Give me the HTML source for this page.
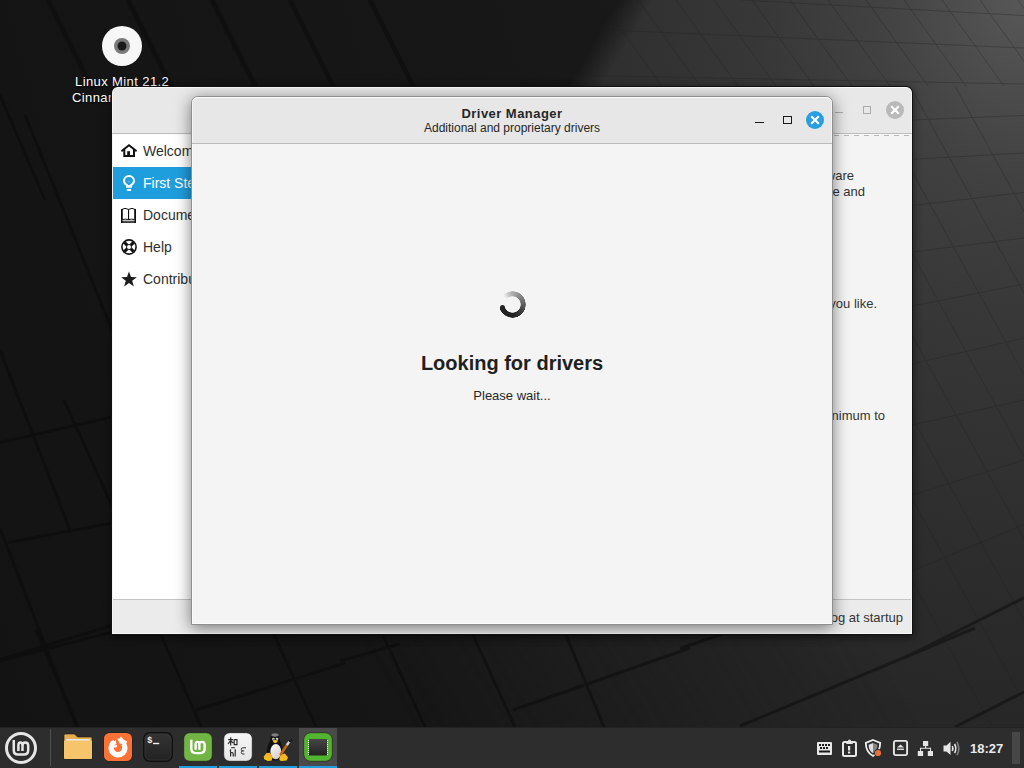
<!DOCTYPE html>
<html><head><meta charset="utf-8">
<style>
*{margin:0;padding:0;box-sizing:border-box}
html,body{width:1024px;height:768px;overflow:hidden;background:#151515;font-family:"Liberation Sans",sans-serif}
.a{position:absolute}
#bg{position:absolute;left:0;top:0;width:1024px;height:768px;
 background:
  radial-gradient(ellipse 620px 760px at 1040px -20px, rgba(62,62,62,1) 0%, rgba(50,50,50,1) 45%, rgba(40,40,40,0.6) 75%, rgba(30,30,30,0) 100%),
  linear-gradient(90deg,#131313 0%,#161616 50%,#222 100%);}
.dlabel{position:absolute;color:#fff;font-size:13px;line-height:16px;letter-spacing:0.4px;text-shadow:0 1px 2px #000;white-space:nowrap}
.t{position:absolute;white-space:nowrap;line-height:1}
.item{position:absolute;left:113px;width:300px;height:32px}
.item.sel{background:#1f9ede}
.lbl{position:absolute;left:143px;font-size:14px;line-height:14px;color:#2f2f2f;white-space:nowrap}
.wtext{position:absolute;font-size:13px;line-height:13px;color:#333;white-space:nowrap;text-align:right}
.title{position:absolute;left:192px;width:640px;text-align:center;color:#262626;white-space:nowrap;line-height:1}
.ind{position:absolute;top:766px;height:2px;width:38px;background:#1f9ede}
</style></head><body>
<div class="a" style="left:0;top:0;width:1024px;height:768px;background:linear-gradient(75deg,#131313 0%,#171717 55%,#1c1c1c 100%)"></div>
<div class="a" style="left:0;top:0;width:1024px;height:768px;-webkit-mask-image:linear-gradient(59deg,transparent 377px,#000 816px);mask-image:linear-gradient(59deg,transparent 377px,#000 816px)">
 <div class="a" style="left:0;top:0;width:1024px;height:768px;background:radial-gradient(ellipse 600px 720px at 1024px 0px,#575757 0%,#414141 25%,#373737 45%,#2c2c2c 80%,#272727 100%);-webkit-mask-image:linear-gradient(120.5deg,transparent 532px,#000 562px);mask-image:linear-gradient(120.5deg,transparent 532px,#000 562px)"></div>
</div>
<svg class="a" style="left:0;top:0" width="1024" height="768" viewBox="0 0 1024 768">
 <defs><clipPath id="rc"><rect x="0" y="0" width="1024" height="86"/><rect x="912" y="0" width="112" height="727"/></clipPath></defs>
 <g stroke="#1e1e1e" stroke-width="1" opacity="0.3" clip-path="url(#rc)"><line x1="600" y1="0" x2="661.9" y2="86"/><line x1="638" y1="0" x2="699.9" y2="86"/><line x1="676" y1="0" x2="737.9" y2="86"/><line x1="714" y1="0" x2="775.9" y2="86"/><line x1="752" y1="0" x2="813.9" y2="86"/><line x1="790" y1="0" x2="851.9" y2="86"/><line x1="828" y1="0" x2="889.9" y2="86"/><line x1="866" y1="0" x2="927.9" y2="86"/><line x1="904" y1="0" x2="965.9" y2="86"/><line x1="942" y1="0" x2="1003.9" y2="86"/><line x1="980" y1="0" x2="1041.9" y2="86"/><line x1="1018" y1="0" x2="1079.9" y2="86"/><line x1="560" y1="28" x2="1024" y2="48"/><line x1="741" y1="0" x2="1024" y2="15.6"/><line x1="560" y1="75" x2="1024" y2="84"/><line x1="912" y1="120" x2="1024" y2="115.4"/><line x1="912" y1="159.3" x2="1024" y2="153"/><line x1="912" y1="205.5" x2="1024" y2="192.5"/><line x1="912" y1="252" x2="1024" y2="238"/><line x1="912" y1="306" x2="1024" y2="284"/><line x1="912" y1="364" x2="1024" y2="338"/><line x1="912" y1="425" x2="1024" y2="400"/><line x1="912" y1="495" x2="1024" y2="460"/><line x1="912" y1="571" x2="1024" y2="524.6"/><line x1="640" y1="86" x2="992.0" y2="726"/><line x1="685" y1="86" x2="1037.0" y2="726"/><line x1="730" y1="86" x2="1082.0" y2="726"/><line x1="775" y1="86" x2="1127.0" y2="726"/><line x1="820" y1="86" x2="1172.0" y2="726"/><line x1="865" y1="86" x2="1217.0" y2="726"/><line x1="910" y1="86" x2="1262.0" y2="726"/><line x1="955" y1="86" x2="1307.0" y2="726"/></g>
 <g stroke="#0b0b0b" stroke-width="5" opacity="0.5"><line x1="48" y1="0" x2="93" y2="90"/><line x1="128" y1="0" x2="173" y2="90"/><line x1="212" y1="0" x2="257" y2="90"/><line x1="290" y1="0" x2="335" y2="90"/><line x1="370" y1="0" x2="415" y2="90"/></g>
 <g stroke="#080808" stroke-width="3" opacity="0.45"><line x1="36" y1="630" x2="78" y2="727"/><line x1="159" y1="630" x2="201" y2="727"/><line x1="272" y1="630" x2="316" y2="727"/><line x1="383" y1="635" x2="425" y2="727"/><line x1="473" y1="635" x2="515" y2="727"/><line x1="566" y1="635" x2="604" y2="727"/><line x1="0" y1="661" x2="112" y2="632"/><line x1="196" y1="710" x2="345" y2="663"/><line x1="340" y1="661" x2="400" y2="644"/><line x1="513" y1="710" x2="690" y2="648"/><line x1="680" y1="648.5" x2="740" y2="628"/><line x1="740" y1="726" x2="975" y2="628"/><line x1="955" y1="727" x2="1024" y2="692"/><line x1="904" y1="658" x2="1024" y2="597.7"/><line x1="64" y1="400" x2="112" y2="506"/><line x1="0" y1="528" x2="76.6" y2="727"/><line x1="0" y1="442.5" x2="112" y2="417"/><line x1="8.5" y1="542.5" x2="112" y2="523"/><line x1="0" y1="659.6" x2="112" y2="625.5"/><line x1="0" y1="95" x2="45" y2="200"/><line x1="25" y1="115" x2="112" y2="330"/><line x1="0" y1="350" x2="70" y2="530"/></g>
</svg>

<!-- desktop icon -->
<svg class="a" style="left:100px;top:24px" width="44" height="44" viewBox="0 0 44 44">
 <circle cx="22" cy="22" r="20" fill="#f7f7f7"/>
 <circle cx="22" cy="22" r="8" fill="#7a7a7a"/>
 <circle cx="22" cy="22" r="4.5" fill="#1a1a1a"/>
</svg>
<div class="dlabel" style="left:75px;top:74px">Linux Mint 21.2</div>
<div class="dlabel" style="left:72px;top:90px">Cinnamon</div>

<!-- ============ welcome window (back) ============ -->
<div class="a" style="left:111px;top:86px;width:802px;height:549px;background:#111;border-radius:7px 7px 0 0;box-shadow:0 2px 8px rgba(0,0,0,.5)"></div>
<div class="a" style="left:112px;top:87px;width:800px;height:547px;background:#e8e8e8;border-radius:6px 6px 0 0;border-top:1px solid #fafafa;border-left:1px solid #f4f4f4;border-right:1px solid #f4f4f4;border-bottom:1px solid #fafafa"></div>
<div class="a" style="left:112px;top:133px;width:800px;height:1px;background:#bdbdbd"></div>
<div class="a" style="left:112px;top:134px;width:800px;height:1px;background:#fafafa"></div>
<div class="a" style="left:113px;top:135px;width:300px;height:464px;background:#fff"></div>
<div class="a" style="left:413px;top:135px;width:498px;height:464px;background:#f4f4f4"></div>
<!-- dashed line -->
<div class="a" style="left:834px;top:135px;width:77px;height:1px;background:repeating-linear-gradient(90deg,#b8b8b8 0 5px,transparent 5px 10px)"></div>
<div class="a" style="left:113px;top:599px;width:798px;height:1px;background:#c4c4c4"></div>
<div class="a" style="left:113px;top:600px;width:798px;height:33px;background:#ebebeb"></div>

<!-- sidebar -->
<div class="item" style="top:135px"></div>
<div class="item sel" style="top:167px"></div>
<svg class="a" style="left:119px;top:141px" width="20" height="20" viewBox="0 0 20 20">
 <path d="M3 9.7 L10 4.3 L17 9.7" fill="none" stroke="#111" stroke-width="2" stroke-linecap="round" stroke-linejoin="miter"/>
 <path d="M5.3 8.3 V15 H15 V8.3" fill="none" stroke="#111" stroke-width="2"/>
 <rect x="8.2" y="10.2" width="2.8" height="5" fill="#111"/>
</svg>
<svg class="a" style="left:119px;top:173px" width="20" height="20" viewBox="0 0 20 20">
 <path d="M7 14.8 V12.6 C5.2 11.4 4 9.8 4 8 A6 6 0 0 1 16 8 C16 9.8 14.8 11.4 13 12.6 V14.8 Z" fill="#fff"/>
 <path d="M10 12.5 C8.6 11.2 6 10 6 8 A4 4 0 0 1 14 8 C14 10 11.4 11.2 10 12.5 Z" fill="#1f9ede"/>
 <path d="M8.4 8 H11.6 L10 9.6 Z" fill="#6cbcec"/>
 <rect x="7.9" y="16" width="4.1" height="2" fill="#fff"/>
</svg>
<svg class="a" style="left:119px;top:205px" width="20" height="20" viewBox="0 0 20 20">
 <rect x="2" y="4" width="1.8" height="13.8" fill="#111"/>
 <rect x="15.2" y="4" width="1.8" height="13.8" fill="#111"/>
 <path d="M2.5 4.6 Q6 2.2 9.5 4.4 Q13 2.2 16.5 4.6" fill="none" stroke="#111" stroke-width="1"/>
 <rect x="9" y="4.2" width="1.1" height="11.3" fill="#111"/>
 <path d="M3.5 14.6 Q6.5 13.6 9.5 14.6 Q12.5 13.6 15.5 14.6" fill="none" stroke="#111" stroke-width="1"/>
 <rect x="3.6" y="15" width="11.8" height="1.4" fill="#c4c4c4"/>
 <rect x="2" y="16.3" width="15" height="1.5" fill="#111"/>
</svg>
<svg class="a" style="left:119px;top:237px" width="20" height="20" viewBox="0 0 20 20">
 <circle cx="10" cy="10" r="7.9" fill="#111"/>
 <circle cx="10" cy="10" r="6.3" fill="#fff"/>
 <path d="M5.4 5.4 L14.6 14.6 M14.6 5.4 L5.4 14.6" stroke="#111" stroke-width="3"/>
 <circle cx="10" cy="10" r="2.5" fill="#fff" stroke="#111" stroke-width="0.9"/>
</svg>
<svg class="a" style="left:119px;top:269px" width="20" height="20" viewBox="0 0 20 20">
 <path d="M10 3 L11.9 8.2 L17.4 8.3 L13 11.6 L14.6 17 L10 13.8 L5.4 17 L7 11.6 L2.6 8.3 L8.1 8.2 Z" fill="#1c1c1c" transform="translate(10 10) scale(1.06) translate(-10 -10)"/>
</svg>
<div class="lbl" style="top:144px">Welcome</div>
<div class="lbl" style="top:176px;color:#fff">First Steps</div>
<div class="lbl" style="top:208px">Documentation</div>
<div class="lbl" style="top:240px">Help</div>
<div class="lbl" style="top:272px">Contribute</div>

<!-- right side text (partially hidden) -->
<div class="wtext" style="right:170px;top:169px">new software</div>
<div class="wtext" style="right:159px;top:185px">your machine and</div>
<div class="wtext" style="right:147px;top:297px">the way you like.</div>
<div class="wtext" style="right:139px;top:409px">to the minimum to</div>
<div class="wtext" style="right:121px;top:611px">Show this dialog at startup</div>

<!-- back window buttons -->
<div class="a" style="left:835px;top:112px;width:8px;height:1px;background:#ababab"></div>
<div class="a" style="left:863px;top:106px;width:8px;height:8px;border:1px solid #ababab"></div>
<svg class="a" style="left:885px;top:100px" width="20" height="20" viewBox="0 0 20 20">
 <circle cx="10" cy="10" r="9" fill="#b9b9b9"/>
 <path d="M6.2 6.2 L13.8 13.8 M13.8 6.2 L6.2 13.8" stroke="#fff" stroke-width="2.1"/>
</svg>

<!-- ============ driver manager ============ -->
<div class="a" style="left:191px;top:96px;width:642px;height:529px;background:#f4f4f4;border:1px solid #8f8f8f;border-radius:7px 7px 0 0;box-shadow:0 3px 16px rgba(0,0,0,.5)"></div>
<div class="a" style="left:192px;top:97px;width:640px;height:46px;background:#e7e7e7;border-radius:6px 6px 0 0;border-top:1px solid #fbfbfb;border-left:1px solid #f5f5f5;border-right:1px solid #f5f5f5"></div>
<div class="a" style="left:192px;top:143px;width:640px;height:1px;background:#bcbcbc"></div>
<div class="a" style="left:192px;top:144px;width:1px;height:480px;background:#fcfcfc"></div>
<div class="a" style="left:192px;top:623px;width:640px;height:1px;background:#fcfcfc"></div>

<div class="title" style="top:107px;font-size:13px;font-weight:bold;letter-spacing:0.45px">Driver Manager</div>
<div class="title" style="top:122px;font-size:12px">Additional and proprietary drivers</div>
<div class="title" style="top:353px;font-size:20px;font-weight:bold;color:#1f1f1f">Looking for drivers</div>
<div class="title" style="top:389px;font-size:13px">Please wait...</div>

<!-- spinner -->
<div class="a" style="left:499px;top:290.5px;width:27px;height:27px;border-radius:50%;
 background:conic-gradient(from 312deg, rgba(34,34,34,0) 0deg, rgba(34,34,34,.3) 40deg, rgba(34,34,34,.6) 110deg, rgba(34,34,34,.85) 170deg, #222 220deg, #222 298deg, rgba(0,0,0,0) 298deg);
 -webkit-mask:radial-gradient(circle, transparent 7.9px, #000 8.4px, #000 13px, transparent 13.5px);"></div>
<div class="a" style="left:499.7px;top:305.3px;width:5.5px;height:5.5px;border-radius:50%;background:#222"></div>

<!-- titlebar buttons -->
<div class="a" style="left:755px;top:121.5px;width:8.5px;height:1.5px;background:#1a1a1a"></div>
<div class="a" style="left:783px;top:115.8px;width:8.6px;height:8.6px;border:1.5px solid #1a1a1a"></div>
<svg class="a" style="left:805px;top:110px" width="20" height="20" viewBox="0 0 20 20">
 <circle cx="10" cy="10" r="9" fill="#2a9ee0"/>
 <path d="M6.2 6.2 L13.8 13.8 M13.8 6.2 L6.2 13.8" stroke="#fff" stroke-width="2.1"/>
</svg>

<!-- ============ panel ============ -->
<div class="a" style="left:0;top:727px;width:1024px;height:1px;background:#222"></div>
<div class="a" style="left:0;top:728px;width:1024px;height:40px;background:#2d2d2d"></div>
<div class="a" style="left:299px;top:728px;width:38px;height:38px;background:#4a4a4a"></div>
<div class="a" style="left:50px;top:729px;width:1px;height:37px;background:#4f4f4f"></div>
<div class="ind" style="left:179px"></div>
<div class="ind" style="left:219px"></div>
<div class="ind" style="left:259px"></div>
<div class="ind" style="left:299px"></div>

<!-- menu -->
<svg class="a" style="left:4px;top:731px" width="34" height="34" viewBox="-17 -17 34 34">
 <circle cx="0" cy="0" r="14.5" fill="none" stroke="#e6e6e6" stroke-width="3"/>
 <path d="M-7.25 -8 V2.3 Q-7.25 6.6 -3 6.6 H3 Q7.2 6.6 7.2 2.3 V-2.6 Q7.2 -5.6 4.3 -5.6 Q1.5 -5.6 1.5 -2.6 V3 M1.5 -2.6 Q1.5 -5.6 -0.6 -5.6 Q-2.6 -5.6 -2.6 -2.6 V3" fill="none" stroke="#e6e6e6" stroke-width="2.5"/>
</svg>
<!-- files -->
<svg class="a" style="left:62px;top:732px" width="32" height="30" viewBox="0 0 32 30">
 <path d="M2 3.5 Q2 2 3.5 2 H12.5 L15.5 5 H28.5 Q30 5 30 6.5 V26 Q30 27 29 27 H3 Q2 27 2 26 Z" fill="#e4ad4f" stroke="#1c1c1c" stroke-width="0.6"/>
 <rect x="4" y="7" width="24" height="3" rx="1" fill="#e3e8ee"/>
 <path d="M2 9 Q2 8.5 2.8 8.5 H29.2 Q30 8.5 30 9 V26 Q30 27 29 27 H3 Q2 27 2 26 Z" fill="#f6c46b"/>
</svg>
<!-- firefox -->
<svg class="a" style="left:103px;top:732px" width="30" height="30" viewBox="-1 -1 30 30">
 <rect x="-0.5" y="-0.5" width="29" height="29" rx="6" fill="#1e1e1e"/>
 <rect x="0" y="0" width="28" height="28" rx="5.5" fill="#fb7237"/>
 <circle cx="14" cy="15" r="9.6" fill="#fff"/>
 <path d="M12.8 9.5 L17 3.6 L19.8 6.8 L23.2 8.6 L21 12.5 Z" fill="#fff"/>
 <path d="M3 3 H13.6 L13.2 7 L11.5 6.8 L10.4 8.2 L9.2 6.4 L7.6 7.6 L6.5 6.5 L3 9 Z" fill="#fb7237"/>
 <path d="M11.6 6.5 L13.9 6.5 L15.8 11 L12.6 11.8 Z" fill="#fb7237"/>
 <circle cx="14" cy="14.8" r="4.2" fill="#fb7237"/>
 <path d="M15 10.6 L18.6 11 L17.6 12.6 Z" fill="#fb7237"/>
 <path d="M9.6 12.4 L13.2 12 L12.6 14.2 L10 14.6 Z" fill="#fff"/>
</svg>
<!-- terminal -->
<svg class="a" style="left:143px;top:732px" width="30" height="30" viewBox="0 0 30 30">
 <defs><linearGradient id="tg" x1="0" y1="0" x2="0" y2="1"><stop offset="0" stop-color="#343434"/><stop offset="1" stop-color="#222"/></linearGradient></defs>
 <rect x="0.8" y="0.8" width="28.4" height="28.4" rx="6" fill="url(#tg)" stroke="#0f0f0f" stroke-width="1.4"/>
 <rect x="2" y="2" width="26" height="26" rx="5" fill="none" stroke="#3a3a3a" stroke-width="0.6"/>
 <text x="4.3" y="10.5" font-family="Liberation Sans" font-size="9" font-weight="bold" fill="#f0f0f0">$</text>
 <rect x="10" y="10.8" width="6.2" height="1.4" fill="#f0f0f0"/>
</svg>
<!-- mint -->
<svg class="a" style="left:183px;top:732px" width="30" height="30" viewBox="0 0 30 30">
 <rect x="0.7" y="0.7" width="28.6" height="28.6" rx="6" fill="#73b545" stroke="#1f1f1f" stroke-width="0.8"/>
 <g transform="translate(15 15) scale(0.92)">
 <path d="M-7.25 -8 V2.3 Q-7.25 6.6 -3 6.6 H3 Q7.2 6.6 7.2 2.3 V-2.6 Q7.2 -5.6 4.3 -5.6 Q1.5 -5.6 1.5 -2.6 V3 M1.5 -2.6 Q1.5 -5.6 -0.6 -5.6 Q-2.6 -5.6 -2.6 -2.6 V3" fill="none" stroke="#fff" stroke-width="2.6"/>
 </g>
</svg>
<!-- input method -->
<svg class="a" style="left:223px;top:732px" width="30" height="30" viewBox="0 0 30 30">
 <defs><linearGradient id="ig" x1="0" y1="0" x2="0" y2="1"><stop offset="0" stop-color="#f7f7f7"/><stop offset="1" stop-color="#e6e6e6"/></linearGradient></defs>
 <rect x="0.7" y="0.7" width="28.6" height="28.6" rx="6" fill="url(#ig)" stroke="#1c1c1c" stroke-width="0.8"/>
 <g stroke="#2a2a2a" stroke-width="1.2" fill="none">
  <path d="M5.2 7.6 H10.2 M7.7 5.2 V13.6 M5 12 L7.7 8.6 L10.2 11.2 M11.2 7.6 V13.2 M11.2 7.6 H14 V13.2 M11.2 12.6 H14"/>
  <path d="M8 17.5 Q6.6 18.6 7.6 20 V24.6 M7.6 21 Q9.8 19.6 10.2 22 V24.6 M12.2 17.2 V24.6 M8.2 16 Q10 15 11.8 16"/>
  <path d="M23 15.8 H19.6 Q18.3 15.8 18.3 17.4 Q18.3 18.9 19.8 18.9 H21.2 M19.8 18.9 Q18.3 18.9 18.3 20.5 Q18.3 22 19.8 22 H21.6" stroke-width="1"/>
 </g>
</svg>
<!-- tux -->
<svg class="a" style="left:260px;top:731px" width="36" height="32" viewBox="0 0 36 32">
 <defs><linearGradient id="belly" x1="0.2" y1="0" x2="0.8" y2="1"><stop offset="0" stop-color="#fafafa"/><stop offset="1" stop-color="#cfc9c2"/></linearGradient>
 <linearGradient id="foot" x1="0" y1="0" x2="0" y2="1"><stop offset="0" stop-color="#f6a93a"/><stop offset="1" stop-color="#f5c80c"/></linearGradient></defs>
 <ellipse cx="15" cy="8.5" rx="4.6" ry="5.8" fill="#111"/>
 <path d="M10.3 9 C8.5 13 6.6 17 6.8 22 C7 27 10 29.5 15 29.5 C20 29.5 23 27 23 22 C23 17 21 13 19.7 9 Z" fill="#111"/>
 <ellipse cx="15" cy="4" rx="3.6" ry="1.7" fill="#7d7d7d"/>
 <ellipse cx="13.4" cy="8" rx="1.3" ry="1.2" fill="#e0e0e0"/>
 <ellipse cx="17" cy="8" rx="1.3" ry="1.2" fill="#e0e0e0"/>
 <circle cx="13.6" cy="8.3" r="0.5" fill="#111"/><circle cx="16.8" cy="8.3" r="0.5" fill="#111"/>
 <path d="M12.5 9.6 Q15.3 8.6 18 9.6 Q17.5 12 15.3 12.2 Q13 12 12.5 9.6 Z" fill="#f2c31a"/>
 <ellipse cx="15.8" cy="20.6" rx="5.4" ry="7.6" fill="url(#belly)"/>
 <path d="M3.8 25.5 L6.5 22 L10 21.8 L12.6 26.5 L11.5 29.6 L8 30 L4.2 28.2 Z" fill="url(#foot)"/>
 <path d="M19.2 28.5 L20.5 23.5 L25 22.6 L28 26.6 L26.5 29.5 L21 30 Z" fill="url(#foot)"/>
 <path d="M20.8 23.2 L27.2 13.6" stroke="#c26a12" stroke-width="2.6" stroke-linecap="round"/>
 <path d="M26.9 14 L29.4 10.6" stroke="#d5d5d5" stroke-width="2.4"/>
 <path d="M29.2 10.8 L32 8.6" stroke="#1a1a1a" stroke-width="2"/>
</svg>
<!-- chip (active) -->
<svg class="a" style="left:303px;top:732px" width="30" height="30" viewBox="0 0 30 30">
 <defs><linearGradient id="cg" x1="0" y1="0" x2="0" y2="1"><stop offset="0" stop-color="#474747"/><stop offset="1" stop-color="#222"/></linearGradient></defs>
 <rect x="0.7" y="0.7" width="28.6" height="28.6" rx="7" fill="#53b52f" stroke="#2a2a2a" stroke-width="0.8"/>
 <rect x="6" y="7" width="18" height="16.5" fill="url(#cg)"/>
 <g fill="#fff">
  <rect x="5" y="8" width="1" height="1"/><rect x="5" y="10" width="1" height="1"/><rect x="5" y="12" width="1" height="1"/><rect x="5" y="14" width="1" height="1"/><rect x="5" y="16" width="1" height="1"/><rect x="5" y="18" width="1" height="1"/><rect x="5" y="20" width="1" height="1"/><rect x="5" y="22" width="1" height="1"/>
  <rect x="24" y="8" width="1" height="1"/><rect x="24" y="10" width="1" height="1"/><rect x="24" y="12" width="1" height="1"/><rect x="24" y="14" width="1" height="1"/><rect x="24" y="16" width="1" height="1"/><rect x="24" y="18" width="1" height="1"/><rect x="24" y="20" width="1" height="1"/><rect x="24" y="22" width="1" height="1"/>
 </g>
</svg>

<!-- systray -->
<svg class="a" style="left:816px;top:740px" width="18" height="17" viewBox="0 0 18 17">
 <rect x="1" y="2" width="15" height="13" rx="1" fill="#e8e8e8"/>
 <g fill="#1a1a1a"><rect x="3" y="4" width="2" height="2"/><rect x="6" y="4" width="2" height="2"/><rect x="9" y="4" width="2" height="2"/><rect x="12" y="4" width="2" height="2"/>
 <rect x="4" y="7" width="2" height="2"/><rect x="7" y="7" width="2" height="2"/><rect x="10" y="7" width="2" height="2"/>
 <rect x="3" y="10.5" width="11" height="2"/></g>
</svg>
<svg class="a" style="left:841px;top:739px" width="17" height="18" viewBox="0 0 17 18">
 <rect x="2" y="3" width="13" height="14" rx="1.5" fill="none" stroke="#e8e8e8" stroke-width="2"/>
 <rect x="5" y="2.5" width="7" height="2.5" rx="1" fill="#e8e8e8"/>
 <circle cx="8.5" cy="2" r="1.5" fill="#e8e8e8"/>
 <rect x="7" y="7" width="2.2" height="4.5" fill="#e8e8e8"/>
 <rect x="7" y="12.5" width="2.2" height="2" fill="#e8e8e8"/>
</svg>
<svg class="a" style="left:864px;top:738px" width="19" height="20" viewBox="0 0 19 20">
 <path d="M9 2 L16.2 4.8 C16.2 11 14 15.5 9 18 C4 15.5 1.8 11 1.8 4.8 Z" fill="none" stroke="#ececec" stroke-width="1.8"/>
 <path d="M9 5 L4.6 6.8 C4.6 10.8 6 13.5 9 15.2 Z" fill="#dedede"/>
 <path d="M9 5 L13.4 6.8 C13.4 10.8 12 13.5 9 15.2 Z" fill="#858585"/>
 <circle cx="14" cy="15" r="3.9" fill="#2d2d2d"/>
 <circle cx="14" cy="15" r="3.1" fill="#e5733a"/>
</svg>
<svg class="a" style="left:892px;top:739px" width="17" height="18" viewBox="0 0 17 18">
 <rect x="1.9" y="1.9" width="13.2" height="14.2" rx="1.8" fill="none" stroke="#e8e8e8" stroke-width="1.9"/>
 <path d="M8.5 5.5 L12 8.5 H5 Z" fill="#e8e8e8"/>
 <rect x="5" y="9.6" width="7" height="1.3" fill="#e8e8e8"/>
</svg>
<svg class="a" style="left:916px;top:740px" width="18" height="17" viewBox="0 0 18 17">
 <rect x="7" y="1" width="5.2" height="5" fill="#e5e5e5"/>
 <rect x="1.8" y="11" width="5.3" height="5" fill="#e5e5e5"/>
 <rect x="11.8" y="11" width="5.2" height="5" fill="#e5e5e5"/>
 <path d="M9.6 6 V8.3 M4.5 11 V8.3 H14.5 V11" fill="none" stroke="#e5e5e5" stroke-width="1.1"/>
</svg>
<svg class="a" style="left:942px;top:740px" width="20" height="17" viewBox="0 0 20 17">
 <path d="M1.5 5.5 H4.5 L8.5 1.8 V15 L4.5 11.5 H1.5 Z" fill="#e6e6e6"/>
 <path d="M10.3 6 Q11.5 8.5 10.3 11" fill="none" stroke="#e6e6e6" stroke-width="1.6"/>
 <path d="M12.6 4 Q15 8.5 12.6 13" fill="none" stroke="#e6e6e6" stroke-width="1.6"/>
 <path d="M15 1.8 Q18.5 8.5 15 15.2" fill="none" stroke="#808080" stroke-width="1.6"/>
</svg>
<div class="t" style="left:970px;top:742px;font-size:13px;font-weight:bold;color:#eaeaea">18:27</div>
<div class="a" style="left:1012px;top:732px;width:8px;height:32px;background:#474747"></div>
</body></html>
